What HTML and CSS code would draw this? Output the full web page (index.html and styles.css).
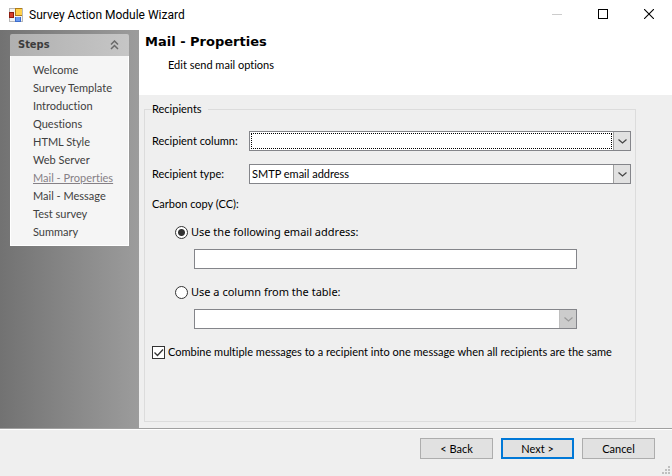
FILE: index.html
```html
<!DOCTYPE html>
<html lang="en">
  <head>
    <meta charset="UTF-8" />
    <meta name="viewport" content="width=device-width, initial-scale=1.0" />
    <title>Survey Action Module Wizard</title>
    <link rel="stylesheet" href="styles.css">
  </head>
  <body>
    <div class="window">
      <header class="titlebar">
        <svg class="app-icon" width="14" height="14" viewBox="0 0 14 14" shape-rendering="crispEdges">
          <rect x="0.5" y="0.5" width="13" height="13" fill="#f4f4f4" stroke="#b8b8b8" />
          <rect x="6" y="0" width="7" height="8" fill="#b07c18" />
          <rect x="7" y="1" width="6" height="6" fill="#ffd04a" />
          <rect x="0" y="4" width="5" height="6" fill="#8c1c10" />
          <rect x="1" y="5" width="3" height="4" fill="#d8402c" />
          <rect x="6" y="9" width="6" height="5" fill="#3c6ccc" />
          <rect x="7" y="9" width="4" height="4" fill="#6c9cf0" />
        </svg>
        <h1>Survey Action Module Wizard</h1>
        <div class="window-buttons">
          <button type="button" aria-label="Minimize" disabled>
            <svg width="10" height="10" viewBox="0 0 10 10"><path d="M0 5.5h10" stroke="#cccccc" /></svg>
          </button>
          <button type="button" aria-label="Maximize">
            <svg width="10" height="10" viewBox="0 0 10 10"><rect x="0.5" y="0.5" width="9" height="9" fill="none" stroke="#000" /></svg>
          </button>
          <button type="button" aria-label="Close">
            <svg width="10" height="10" viewBox="0 0 10 10"><path d="M0 0l10 10M10 0L0 10" stroke="#000" stroke-width="1.1" /></svg>
          </button>
        </div>
      </header>

      <div class="content">
        <aside class="sidebar">
          <nav class="steps">
            <h2>
              Steps
              <svg width="9" height="10" viewBox="0 0 9 10"><path d="M1 4.5L4.5 1L8 4.5M1 9L4.5 5.5L8 9" fill="none" stroke="#6a6a6a" stroke-width="1.5" /></svg>
            </h2>
            <ul>
              <li><a href="#">Welcome</a></li>
              <li><a href="#">Survey Template</a></li>
              <li><a href="#">Introduction</a></li>
              <li><a href="#">Questions</a></li>
              <li><a href="#">HTML Style</a></li>
              <li><a href="#">Web Server</a></li>
              <li><a href="#" class="current">Mail - Properties</a></li>
              <li><a href="#">Mail - Message</a></li>
              <li><a href="#">Test survey</a></li>
              <li><a href="#">Summary</a></li>
            </ul>
          </nav>
        </aside>

        <main class="page">
          <div class="page-header">
            <h2>Mail - Properties</h2>
            <p>Edit send mail options</p>
          </div>

          <form id="mail-form">
            <fieldset>
              <legend>Recipients</legend>
              <div class="row">
                <label for="recipient-column">Recipient column:</label>
                <div class="combo focused">
                  <select id="recipient-column">
                    <option></option>
                  </select>
                  <span class="arrow"><svg width="9" height="5" viewBox="0 0 9 5"><path d="M0.5 0.5l4 3.5l4-3.5" /></svg></span>
                </div>
              </div>
              <div class="row">
                <label for="recipient-type">Recipient type:</label>
                <div class="combo">
                  <select id="recipient-type">
                    <option>SMTP email address</option>
                  </select>
                  <span class="arrow"><svg width="9" height="5" viewBox="0 0 9 5"><path d="M0.5 0.5l4 3.5l4-3.5" /></svg></span>
                </div>
              </div>
              <p class="caption">Carbon copy (CC):</p>
              <div class="choices">
                <label class="choice"><input type="radio" name="cc" checked />Use the following email address:</label>
                <input class="textbox" type="text" aria-label="Email address" />
                <label class="choice"><input type="radio" name="cc" />Use a column from the table:</label>
                <div class="combo disabled">
                  <select aria-label="Table column" disabled>
                    <option></option>
                  </select>
                  <span class="arrow"><svg width="9" height="5" viewBox="0 0 9 5"><path d="M0.5 0.5l4 3.5l4-3.5" /></svg></span>
                </div>
              </div>
              <label class="combine">
                <span class="check">
                  <input type="checkbox" checked />
                  <svg width="13" height="13" viewBox="0 0 13 13"><path d="M2.5 6.5l3 3l5.500-6" /></svg>
                </span>
                Combine multiple messages to a recipient into one message when all recipients are the same
              </label>
            </fieldset>
          </form>
        </main>
      </div>

      <footer class="footer">
        <button type="button">&lt; Back</button>
        <button type="submit" form="mail-form" class="default">Next &gt;</button>
        <button type="button">Cancel</button>
        <svg class="grip" width="8" height="8" viewBox="0 0 8 8" shape-rendering="crispEdges">
          <path d="M6 0h2v2h-2zM3 3h2v2h-2zM6 3h2v2h-2zM0 6h2v2h-2zM3 6h2v2h-2zM6 6h2v2h-2z" fill="#bfbfbf" />
        </svg>
      </footer>
    </div>
  </body>
</html>
```

FILE: styles.css
```css
* {
  box-sizing: border-box;
}
body {
  margin: 0;
  font-family: Tahoma, Lato, sans-serif;
  font-size: 11px;
  font-variant-ligatures: none;
  line-height: 18px;
  color: #000;
  background: #efefef;
}
h1,
h2,
p,
ul {
  margin: 0;
  padding: 0;
}
button,
input,
select {
  font: inherit;
  color: inherit;
}
.window {
  display: flex;
  flex-direction: column;
  min-height: 100vh;
}

/* title bar */
.titlebar {
  display: flex;
  align-items: center;
  height: 30px;
  padding-left: 9px;
  background: #fff;
}
.titlebar h1 {
  margin-left: 6px;
  font-family: "Segoe UI", Roboto, sans-serif;
  font-size: 12px;
  font-weight: normal;
}
.window-buttons {
  display: flex;
  align-self: flex-start;
  margin-left: auto;
}
.window-buttons button {
  display: flex;
  align-items: center;
  justify-content: center;
  width: 46px;
  height: 28px;
  padding: 0;
  border: none;
  background: none;
}

/* steps panel */
.content {
  display: flex;
  flex: 1;
}
.sidebar {
  flex: none;
  width: 139px;
  padding: 4px 10px;
  background: linear-gradient(to right, #727272, #9c9c9c);
}
.steps h2 {
  display: flex;
  align-items: center;
  justify-content: space-between;
  height: 22px;
  padding: 0 10px 0 8px;
  border-radius: 2px 2px 0 0;
  background: linear-gradient(to right, #b0b0b0, #c6c6c6);
  color: #3c3c3c;
  font-family: Tahoma, "DejaVu Sans Condensed", sans-serif;
  font-size: 11px;
}
.steps ul {
  padding: 5px 0 4px 22px;
  border: 1px solid #fff;
  border-top: none;
  background: #f5f5f5;
  list-style: none;
}
.steps a {
  color: #404040;
  text-decoration: none;
}
.steps a.current {
  color: #858085;
  text-decoration: underline;
}

/* wizard page */
.page {
  flex: 1;
}
.page-header {
  height: 65px;
  padding: 3px 6px;
  background: #fff;
}
.page-header h2 {
  font-family: "DejaVu Sans", sans-serif;
  font-size: 13px;
}
.page-header p {
  margin: 5px 23px;
}
form {
  padding: 5px 36px 6px 5px;
}
fieldset {
  margin: 0;
  padding: 13px 4px 60px 7px;
  border: 1px solid #dcdcdc;
}
legend {
  padding: 0 6px 0 0;
}
.row {
  display: flex;
  align-items: center;
  margin-bottom: 13px;
}
.row label {
  width: 97px;
}
.row .combo {
  flex: 1;
}
.combo {
  position: relative;
  height: 20px;
  border: 1px solid #84858a;
  background: #fff;
}
.combo select {
  display: block;
  width: 100%;
  height: 18px;
  padding: 0 18px 0 2px;
  border: none;
  outline: none;
  background: none;
  appearance: none;
}
.arrow {
  position: absolute;
  top: 0;
  right: 0;
  bottom: 0;
  display: flex;
  align-items: center;
  justify-content: center;
  width: 17px;
  border-left: 1px solid #a0a0a0;
  background: #e1e1e1;
  pointer-events: none;
}
.arrow path {
  fill: none;
  stroke: #444;
  stroke-width: 1.2;
}
.focused::after {
  content: "";
  position: absolute;
  inset: 1px 18px 1px 1px;
  border: 1px dotted #000;
  pointer-events: none;
}
.disabled .arrow {
  border-left-color: #bfbfbf;
  background: #cccccc;
}
.disabled .arrow path {
  stroke: #9a9a9a;
}
.caption {
  line-height: 14px;
}
.choices {
  padding: 12px 54px 0 42px;
}
.choice {
  display: flex;
  align-items: center;
  margin-left: -19px;
  font-family: "Noto Sans", sans-serif;
}
.choice input {
  width: 13px;
  height: 13px;
  margin: 0 3px 0 0;
  border: 1px solid #333;
  border-radius: 50%;
  background: #fff;
  appearance: none;
}
.choice input:checked {
  background: radial-gradient(circle, #333 3px, #fff 4px);
}
.textbox {
  display: block;
  width: 100%;
  height: 20px;
  padding: 0 3px;
  border: 1px solid #84858a;
  background: #fff;
}
.choices .textbox,
.choices .combo {
  margin: 8px 0 14px;
}
.combine {
  display: flex;
  align-items: center;
  gap: 3px;
}
.check {
  position: relative;
  display: flex;
}
.check input {
  width: 13px;
  height: 13px;
  margin: 0;
  border: 1px solid #333;
  background: #fff;
  appearance: none;
}
.check svg {
  position: absolute;
  top: 0;
  left: 0;
  pointer-events: none;
}
.check path {
  fill: none;
  stroke: #333;
  stroke-width: 1.3;
}
.check input:not(:checked) + svg {
  display: none;
}

/* wizard buttons */
.footer {
  position: relative;
  display: flex;
  justify-content: flex-end;
  gap: 8px;
  height: 48px;
  padding: 9px 17px 0;
  border-top: 1px solid #a0a0a0;
  box-shadow: inset 0 1px #fff;
}
.footer button {
  width: 73px;
  height: 21px;
  padding: 0;
  border: 1px solid #adadad;
  background: #e1e1e1;
}
.footer .default {
  border: 2px solid #0078d7;
}
.grip {
  position: absolute;
  right: 2px;
  bottom: 2px;
}
```
